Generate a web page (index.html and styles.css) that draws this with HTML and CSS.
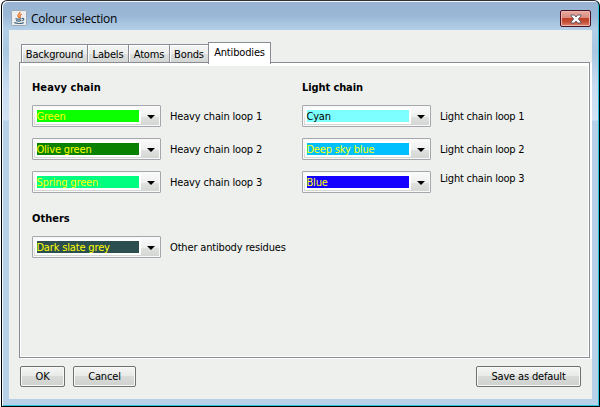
FILE: index.html
```html
<!DOCTYPE html>
<html lang="en">
<head>
<meta charset="utf-8">
<title>Colour selection</title>
<link rel="stylesheet" href="styles.css">
</head>
<body>
<div class="window">
  <header class="titlebar">
    <svg class="java" width="16" height="16" viewBox="0 0 16 16">
      <rect x=".5" y=".5" width="15" height="15" rx="1" fill="#eceef0" stroke="#9da8b2"/>
      <path d="M8.800 1.800c1 1.800-3 2.500-1.800 4.400.5.700.9 1 .8 1.800M10.700 4.200c-1.900.7-2.200 1.400-1.500 2.300.4.700-.1 1.200-.6 1.600" fill="none" stroke="#e8762d" stroke-width="1.400"/>
      <path d="M4.500 8.600c1.500.6 4.500.6 6 0M5 10.500c1.600.6 3.900.6 5.300 0M11 8.500c2.500-.5 2.100 1.700.2 2.200M3.200 12.600c2.200 1.300 7.600 1.200 9.600-.2" fill="none" stroke="#47687f" stroke-width="1.200"/>
    </svg>
    <h1>Colour selection</h1>
    <button class="close" aria-label="Close">
      <svg width="12" height="10" viewBox="0 0 12 10"><path d="M1 1h3.200L6 3l1.800-2H11v1L8.300 5 11 8v1H7.800L6 7 4.200 9H1V8l2.700-3L1 2z" fill="#fff" stroke="#535666" stroke-width=".9"/></svg>
    </button>
  </header>
  <main class="client">
    <nav class="tabs">
      <button class="tab background">Background</button>
      <button class="tab labels">Labels</button>
      <button class="tab atoms">Atoms</button>
      <button class="tab bonds">Bonds</button>
      <button class="tab active">Antibodies</button>
    </nav>
    <section class="panel">
      <div class="group heavy">
        <h2>Heavy chain</h2>
        <div class="row"><div class="combo"><span class="swatch green">Green</span><i class="arrow"></i></div><label>Heavy chain loop 1</label></div>
        <div class="row"><div class="combo"><span class="swatch olive">Olive green</span><i class="arrow"></i></div><label>Heavy chain loop 2</label></div>
        <div class="row"><div class="combo"><span class="swatch spring">Spring green</span><i class="arrow"></i></div><label>Heavy chain loop 3</label></div>
      </div>
      <div class="group light">
        <h2>Light chain</h2>
        <div class="row"><div class="combo"><span class="swatch cyan">Cyan</span><i class="arrow"></i></div><label>Light chain loop 1</label></div>
        <div class="row"><div class="combo"><span class="swatch sky">Deep sky blue</span><i class="arrow"></i></div><label>Light chain loop 2</label></div>
        <div class="row"><div class="combo"><span class="swatch blue">Blue</span><i class="arrow"></i></div><label class="raised">Light chain loop 3</label></div>
      </div>
      <div class="group others">
        <h2>Others</h2>
        <div class="row"><div class="combo"><span class="swatch slate">Dark slate grey</span><i class="arrow"></i></div><label>Other antibody residues</label></div>
      </div>
    </section>
    <footer class="actions">
      <button class="btn ok">OK</button>
      <button class="btn cancel">Cancel</button>
      <button class="btn save">Save as default</button>
    </footer>
  </main>
</div>
</body>
</html>
```
FILE: styles.css
```css
* { box-sizing: border-box; }
body {
  margin: 0;
  width: 600px;
  height: 407px;
  overflow: hidden;
  background: #fff;
  color: #000;
  font: 11px/14px "DejaVu Sans Condensed", "DejaVu Sans", sans-serif;
  font-stretch: condensed;
  letter-spacing: -0.16px;
}
button { font: inherit; color: inherit; letter-spacing: inherit; padding: 0; margin: 0; white-space: nowrap; }
h1, h2 { margin: 0; }

.window {
  margin-left: 1px;
  width: 599px;
  height: 407px;
  border: 1px solid #000;
  border-top-color: #302f35;
  border-radius: 6px 6px 0 0;
  padding: 1px 6px 5px 7px;
  background: linear-gradient(#98b4d1 0, #9ab7d7 15px, #b3cfe7 28px, #a9c7e2 50px, #c9dcf1 85px, #d3e2f4 119px, #b6d1e8 120px);
  box-shadow: inset 1px 1px #f2f7fb, inset -1px -1px #2cc4da;
}
.titlebar {
  height: 28px;
  display: flex;
  align-items: flex-start;
  padding: 8px 2px 0 2px;
}
h1 {
  font: 12px/16px "Open Sans", "Noto Sans", sans-serif;
  font-stretch: normal;
  letter-spacing: -0.26px;
  margin: 1px 0 0 4px;
  flex: 1;
}
.close {
  width: 31px;
  height: 17px;
  border: 1px solid #4b1226;
  border-radius: 2px;
  background: linear-gradient(#e8aaa0, #d98a7f 7px, #bd3d25 7px, #c64f35 11px, #d98674);
  box-shadow: inset 0 0 0 1px #edb6ad;
  display: flex;
  align-items: center;
  justify-content: center;
}

.client {
  width: 583px;
  height: 369px;
  background: #eef0ee;
  padding: 12px 2px 0 10px;
}
.tabs {
  display: flex;
  align-items: flex-end;
  height: 20px;
  padding-left: 2px;
}
.tab {
  height: 18px;
  border: 1px solid #898c95;
  border-bottom: 0;
  padding-top: 2px;
  background: linear-gradient(#f3f4f3, #eceeec 9px, #dfe1df 9px, #d2d5d2);
  box-shadow: inset 1px 1px #fff;
}
.background { width: 67px; }
.labels { width: 41px; }
.atoms { width: 41px; }
.bonds { width: 39px; }
.tab + .tab { border-left: 0; }
.tab.active {
  width: 63px;
  height: 22px;
  margin: 0 0 -2px -1px;
  border-left: 1px solid #898c95;
  background: #fff;
  position: relative;
  padding: 0 0 2px;
}
.panel {
  width: 571px;
  height: 296px;
  border: 1px solid #898c95;
  box-shadow: inset 1px 3px #fff, inset -1px -1px #fff, 2px 1px #fff;
  padding: 18px 0 0 12px;
  display: grid;
  grid-template-columns: 270px 270px;
  grid-template-rows: 131px 60px;
}
h2 { font-size: 11px; line-height: 14px; font-weight: bold; letter-spacing: 0; margin-bottom: 10px; }
.light h2 { letter-spacing: -0.1px; }
.heavy h2 { letter-spacing: 0.08px; }
.row { display: flex; align-items: center; height: 22px; margin-bottom: 11px; }
.combo {
  width: 129px;
  height: 22px;
  border: 1px solid #a5a7ac;
  border-radius: 1px;
  padding: 2px 1px 2px 2px;
  display: flex;
  align-items: center;
  background: linear-gradient(#fafafa, #eef0ee 11px, #dfe2df 11px, #d2d5d2);
  box-shadow: inset 0 0 0 1px #f8f9f8;
}
.swatch {
  width: 106px;
  height: 16px;
  border: 2px solid #fff;
  line-height: 14px;
  color: #ff0;
  white-space: nowrap;
  text-indent: -0.6px;
}
.green { background: #0cff00; }
.olive { background: #098100; }
.spring { background: #00ff7f; }
.cyan { background: #7dffff; color: #000; }
.sky { background: #00bfff; }
.blue { background: #1400ff; }
.slate { background: #2b4f4f; }
.arrow {
  width: 8px;
  height: 4px;
  margin: 2px 4px 0 auto;
  background: #000;
  clip-path: polygon(0 0, 100% 0, 50% 100%);
}
label { margin: 2px 0 0 9px; white-space: nowrap; }
.light label { letter-spacing: -0.22px; }
label.raised { margin-top: -6px; }
.actions { display: flex; padding: 8px 9px 0 1px; }
.btn {
  height: 21px;
  border: 1px solid #707070;
  border-radius: 2px;
  background: linear-gradient(#f4f5f4, #e8eae8 9px, #d9dbd9 9px, #cfd1cf);
  box-shadow: inset 0 0 0 1px #f7f8f7;
}
.ok { width: 45px; }
.cancel { width: 63px; margin-left: 8px; }
.save { width: 105px; margin-left: auto; }
```
